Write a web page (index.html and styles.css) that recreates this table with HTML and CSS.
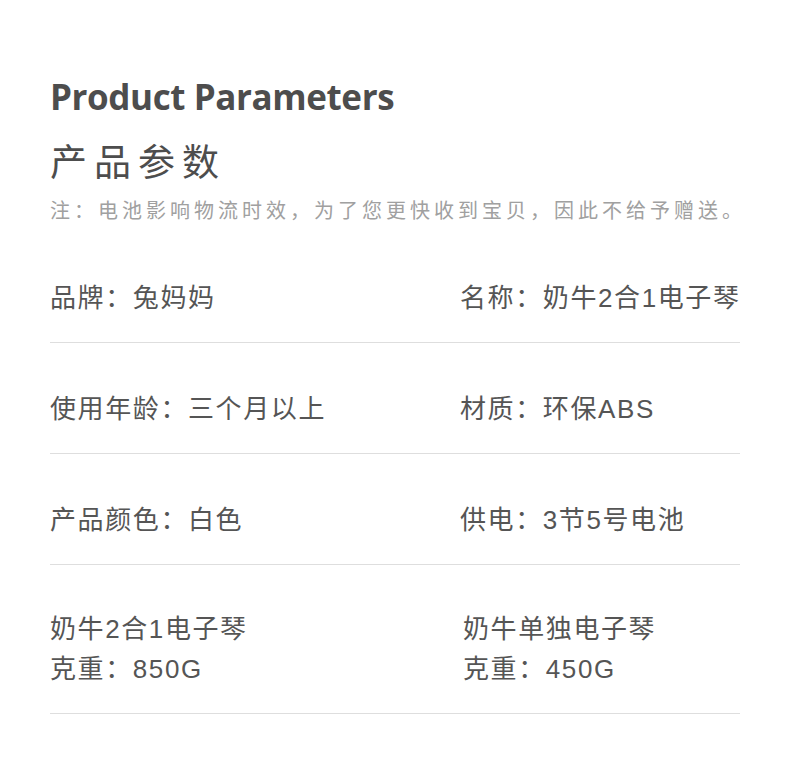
FILE: index.html
```html
<!DOCTYPE html>
<html lang="zh-CN">
<head>
    <meta charset="UTF-8">
    <meta name="viewport" content="width=device-width, initial-scale=1.0">
    <title>产品参数</title>
    <link rel="stylesheet" href="styles.css">
</head>
<body>
    <div class="wrap">
        <h1 class="en-title">Product Parameters</h1>
        <h2 class="cn-title">产品参数</h2>
        <p class="note">注：电池影响物流时效，为了您更快收到宝贝，因此不给予赠送。</p>

        <div class="row">
            <div class="cell">品牌：兔妈妈</div>
            <div class="cell">名称：奶牛2合1电子琴</div>
        </div>
        <div class="row">
            <div class="cell">使用年龄：三个月以上</div>
            <div class="cell">材质：环保ABS</div>
        </div>
        <div class="row">
            <div class="cell">产品颜色：白色</div>
            <div class="cell">供电：3节5号电池</div>
        </div>
        <div class="row row-tall">
            <div class="cell">奶牛2合1电子琴<br>克重：850G</div>
            <div class="cell cell-shift">奶牛单独电子琴<br>克重：450G</div>
        </div>
    </div>
</body>
</html>
```

FILE: styles.css
```css
body{
    margin: 0;
    background: #fff;
    font-family: "Liberation Sans", "Noto Sans CJK SC", sans-serif;
    color: #555;
}

.wrap{
    width: 690px;
    padding-left: 50px;
    padding-top: 77px;
}

.en-title{
    margin: 0;
    font-family: "Open Sans", "Liberation Sans", sans-serif;
    font-size: 35px;
    font-weight: bold;
    line-height: 40px;
    letter-spacing: -0.4px;
    color: #4d4d4d;
}

.cn-title{
    margin: 18px 0 0;
    font-family: "Noto Sans CJK SC", sans-serif;
    font-size: 37px;
    font-weight: normal;
    line-height: 50px;
    letter-spacing: 7px;
    color: #4d4d4d;
}

.note{
    margin: 10px 0 0;
    font-family: "Noto Sans CJK SC", sans-serif;
    font-size: 20px;
    line-height: 30px;
    letter-spacing: 4px;
    white-space: nowrap;
    color: #a0a0a0;
}

.row{
    display: grid;
    grid-template-columns: 410px 1fr;
    padding: 51px 0 29px;
    border-bottom: 1px solid #dedede;
    font-size: 26px;
    line-height: 30px;
    letter-spacing: 1.6px;
    white-space: nowrap;
}
.row:first-of-type{
    margin-top: 7px;
}

.row-tall{
    padding: 44px 0 24px;
    line-height: 40px;
}

.cell-shift{
    padding-left: 3px;
}
```
